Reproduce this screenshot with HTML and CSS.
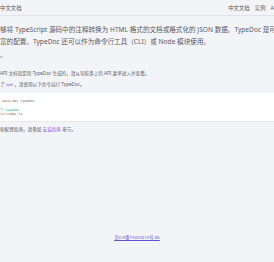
FILE: index.html
```html
<!DOCTYPE html>
<html lang="zh-CN">
<head>
    <meta charset="UTF-8">
    <meta name="viewport" content="width=device-width, initial-scale=1.0">
    <title>TypeDoc 中文文档</title>
    <link rel="stylesheet" href="styles.css">
</head>
<body>
    <div class="nav">
        <span class="brand">中文文档</span>
        <div class="nav-links">
            <span>中文文档</span>
            <span>实例</span>
            <span>A</span>
        </div>
    </div>
    <div class="doc">
        <p class="lead">够将 TypeScript 源码中的注释转换为 HTML 格式的文档或格式化的 JSON 数据。TypeDoc 是可</p>
        <p class="lead">富的配置。TypeDoc 还可以作为命令行工具（CLI）或 Node 模块使用。</p>
        <p class="heading-tail">s</p>
        <p class="text first">API 文档就是用 TypeDoc 生成的，请从导航条上的 API 菜单进入并查看。</p>
        <p class="text">了 <code>npm</code> ，请使用以下命令运行 TypeDoc。</p>
        <div class="code-block">
            <div>-save-dev typedoc</div>
            <div class="gap comment">了 typedoc</div>
            <div>rc/index.ts</div>
        </div>
        <p class="text">和配置指南，请参阅 <a href="#">安装指南</a> 章节。</p>
    </div>
    <div class="footer">
        <a href="#">京ICP备15031610号-85</a>
    </div>
</body>
</html>
```

FILE: styles.css
```css
body {
    margin: 0;
    padding: 0;
    font-family: "Noto Sans", "Noto Sans CJK SC", sans-serif;
    background-color: #f3f4f8;
    color: #5a5a62;
    height: 262px;
    overflow: hidden;
    display: flex;
    flex-direction: column;
}
.nav {
    height: 15px;
    border-bottom: 1px solid #e2e3e8;
    display: flex;
    justify-content: space-between;
    align-items: center;
    font-size: 5.4px;
    color: #5a5a62;
    white-space: nowrap;
}
.nav-links {
    display: flex;
    gap: 5px;
    margin-right: 0;
}
.doc {
    white-space: nowrap;
    overflow: hidden;
    padding-top: 8px;
}
.doc p {
    margin: 0;
}
.lead {
    font-size: 6.6px;
    line-height: 12px;
}
.heading-tail {
    font-size: 4.2px;
    line-height: 5px;
    margin-top: 6px !important;
}
.text {
    font-size: 4.6px;
    line-height: 11px;
}
.text.first {
    margin-top: 9px !important;
}
.text code {
    font-family: "DejaVu Sans Mono", monospace;
    color: #8e5cd9;
    font-size: 4px;
}
.text a {
    color: #8e5cd9;
    text-decoration: none;
}
.code-block {
    background: #ffffff;
    font-family: "DejaVu Sans Mono", monospace;
    font-size: 3.4px;
    line-height: 4px;
    color: #6a6a72;
    padding: 6px 0 5px;
    margin: 3px 0 2px;
    border-bottom: 1px solid #e8e9ee;
}
.code-block .gap {
    margin-top: 5px;
}
.code-block .comment {
    color: #3fa35c;
}
.footer {
    margin-top: auto;
    height: 28px;
    text-align: center;
    font-size: 4.3px;
}
.footer a {
    color: #5a56c8;
    text-decoration: underline;
}
```
